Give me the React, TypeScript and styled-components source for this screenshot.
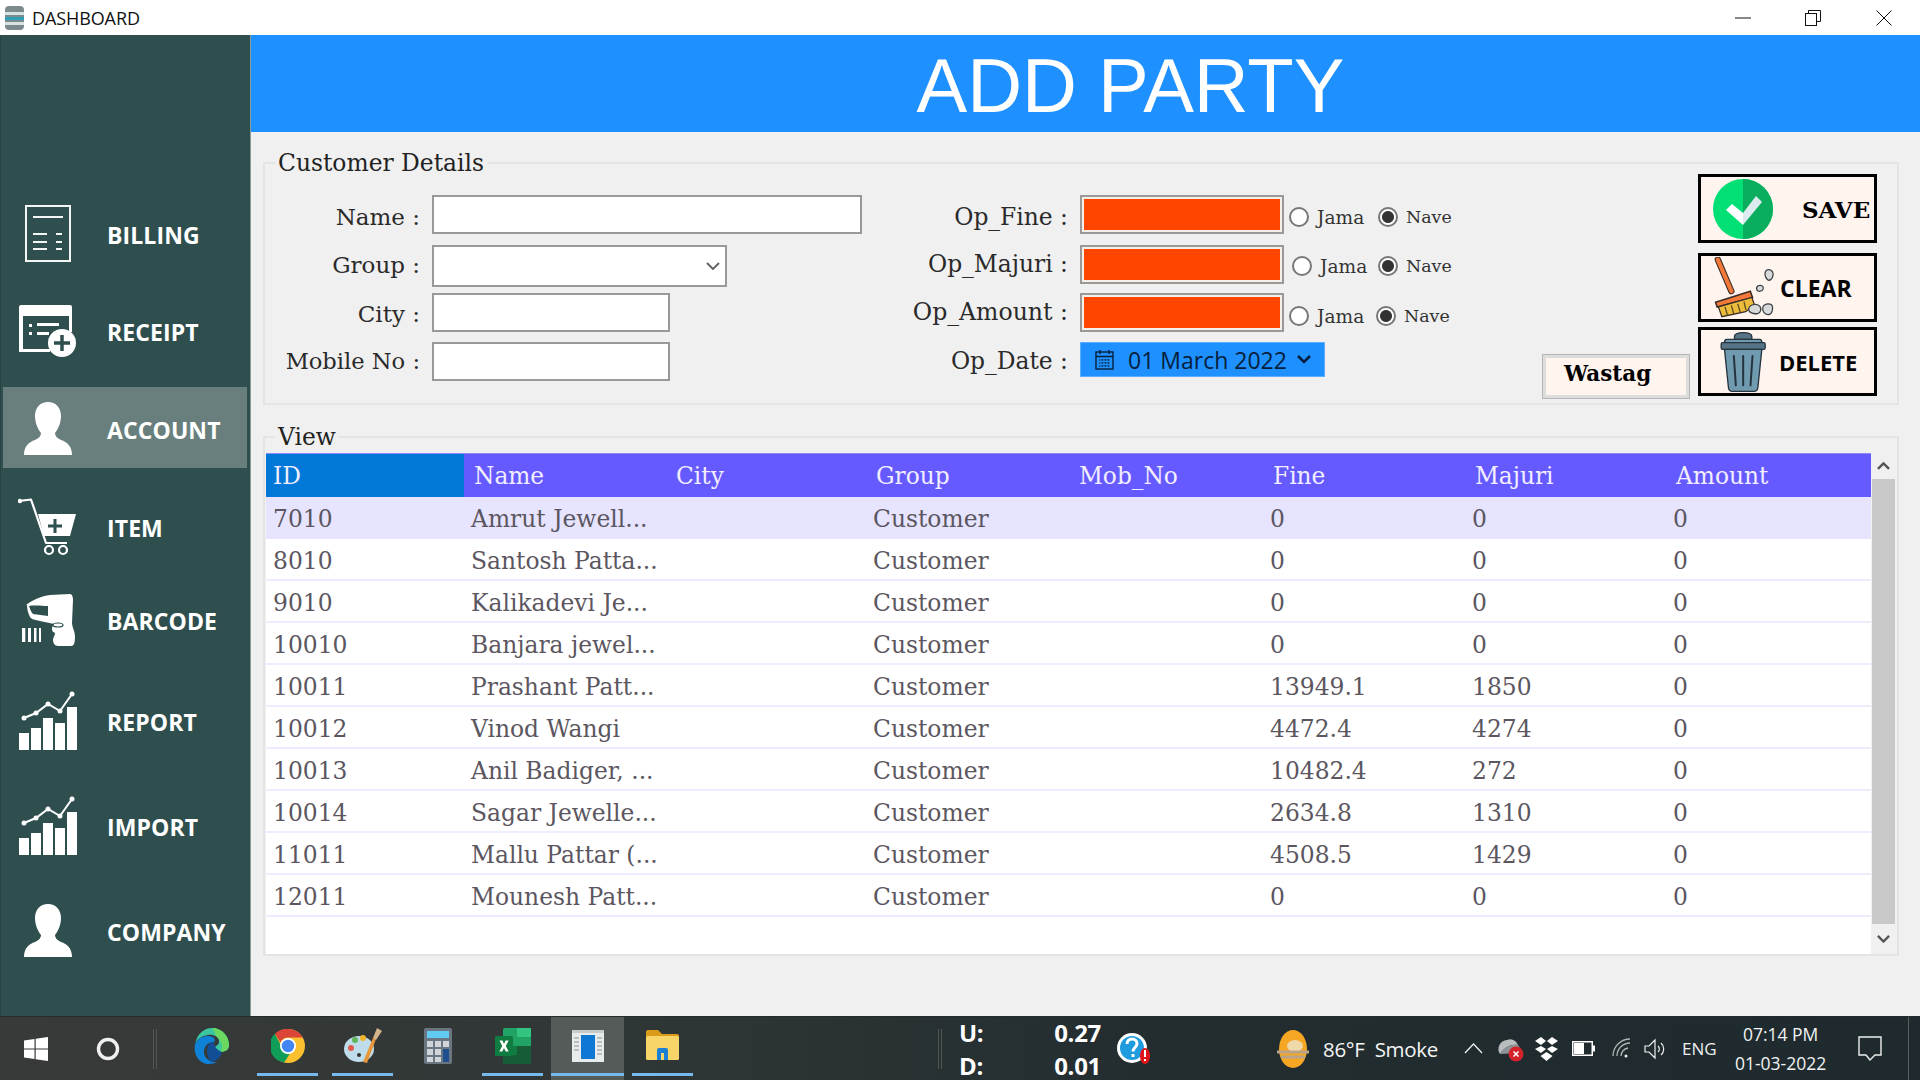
import React from "react";
import styled, { createGlobalStyle } from "styled-components";

const Global = createGlobalStyle`
  html, body { margin: 0; padding: 0; width: 1920px; height: 1080px; overflow: hidden; background: #f0f0f0; }
  * { box-sizing: border-box; }
`;

const SERIF = `"DejaVu Serif", "Liberation Serif", serif`;
const SANS = `"Open Sans", "Noto Sans", sans-serif`;

const Screen = styled.div`display: flex; flex-direction: column; width: 1920px; height: 1080px;`;

/* Title bar */
const TitleBar = styled.header`
  display: flex; align-items: center; height: 35px; background: #fff; flex: none;
  padding: 0 1px 0 5px; font: 400 18px ${SANS}; color: #111;
`;
const TitleText = styled.span`margin-left: 8px; flex: 1; letter-spacing: -0.1px;`;
const WinButton = styled.span<{ $w: number }>`display: flex; justify-content: center; align-items: center; width: ${p => p.$w}px; height: 35px;`;

/* Body */
const Body = styled.div`display: flex; flex: 1; min-height: 0;`;
const Sidebar = styled.nav`
  width: 251px; flex: none; background: #2f4f4f; padding-top: 151px;
  border-left: 1px solid #284343; border-right: 1px solid #8c9a9a;
`;
const NavItem = styled.div<{ $h: number; $mt?: number; $pt?: number; $active?: boolean }>`
  display: flex; align-items: center; height: ${p => p.$h}px; margin: ${p => p.$mt ?? 0}px 0 0 2px; width: 244px;
  padding-top: ${p => p.$pt ?? 0}px;
  background: ${p => (p.$active ? "#697f7e" : "transparent")};
`;
const NavIcon = styled.span`display: flex; justify-content: center; width: 90px; flex: none; margin-top: -3px;`;
const NavLabel = styled.span`margin-left: 14px; font: 700 23px ${SANS}; color: #fff; letter-spacing: 0.1px;`;

const Main = styled.main`flex: 1; display: flex; flex-direction: column; min-width: 0; background: #f0f0f0;`;
const Banner = styled.div`
  height: 97px; flex: none; background: #1e90ff; color: #fff; display: flex; align-items: center; justify-content: center;
  padding: 3px 0 0 90px; font: 400 76px "Liberation Sans", Arial, sans-serif;
`;
const Content = styled.div`padding: 30px 21px 0 12px; display: flex; flex-direction: column; gap: 31px;`;
const Panel = styled.section<{ $h: number }>`
  position: relative; height: ${p => p.$h}px; border: 2px solid #e4e4e4;
`;
const Legend = styled.span<{ $x: number }>`
  position: absolute; left: ${p => p.$x}px; top: -16px; padding: 0 3px; background: #f0f0f0;
  font: 400 23.4px/30px ${SERIF}; color: #222;
`;

/* Customer form */
const DetailsRow = styled.div`display: flex; height: 100%; padding: 31px 20px 0 0;`;
const FormGrid = styled.div<{ $label: number; $ml: number }>`
  display: grid; grid-template-columns: ${p => p.$label}px auto; column-gap: 12px;
  grid-template-rows: 50px 48px 49px auto; align-content: start; margin-left: ${p => p.$ml}px;
`;
const Label = styled.label<{ $y?: number; $size?: number }>`
  font: 400 ${p => p.$size ?? 23}px/38px ${SERIF}; color: #2a2a2a; text-align: right; white-space: nowrap;
  padding-top: ${p => p.$y ?? 0}px;
`;
const TextField = styled.input<{ $w: number }>`
  display: block; width: ${p => p.$w}px; height: 39px; background: #fff; border: 2px solid #999; outline: 0; padding: 0;
`;
const SelectBox = styled.div`
  display: flex; align-items: center; justify-content: flex-end; width: 295px; height: 42px;
  background: #fff; border: 2px solid #999; padding-right: 5px;
`;
const FineRow = styled.div`display: flex; align-items: flex-start;`;
const FineBox = styled.input`
  display: block; width: 204px; height: 39px; background: #ff4500; border: 2px solid #999;
  box-shadow: inset 0 0 0 2px #f4efe9; outline: 0; padding: 0;
`;
const RadioPair = styled.span<{ $ml: number; $y: number }>`
  display: flex; align-items: center; margin-left: ${p => p.$ml}px; margin-top: ${p => p.$y}px; height: 24px;
  font: 400 18.600px ${SERIF}; color: #333;
`;
const RadioDot = styled.span<{ $on?: boolean; $ml?: number }>`
  width: 20px; height: 20px; border-radius: 50%; border: 2px solid #777; margin: 0 8px 0 ${p => p.$ml ?? 0}px; flex: none;
  background: ${p => (p.$on ? "radial-gradient(circle, #333 0 5.5px, #fff 6.5px)" : "#fff")};
`;
const RadioText = styled.span`display: inline-block; width: 50px; margin-right: 10px;`;
const RadioNave = styled.span`font-size: 17.400px;`;
const DateBox = styled.div`
  display: flex; align-items: center; width: 245px; height: 35px; background: #1e90ff; border: 1px solid #5aaeff;
  padding-left: 14px; font: 400 23px ${SANS}; color: #06203c;
`;
const DateText = styled.span`margin: 0 10px 0 14px; letter-spacing: 0;`;

const Actions = styled.div`display: flex; align-items: flex-end; margin: -21px 0 0 auto; height: 222px; gap: 8px;`;
const ActionStack = styled.div`display: flex; flex-direction: column; width: 179px;`;
const ActionBtn = styled.button<{ $mt: number; $pl: number }>`
  display: flex; align-items: center; width: 179px; height: 69px; flex: none; margin-top: ${p => p.$mt}px;
  background: #fff4ee; border: 3px solid #000; padding: 0 0 0 ${p => p.$pl}px; cursor: default;
`;
const BtnSerif = styled.span`margin-left: 29px; padding-top: 2px; font: 700 23px ${SERIF}; color: #000;`;
const BtnSans = styled.span<{ $ml: number; $size: number }>`margin-left: ${p => p.$ml}px; font: 700 ${p => p.$size}px ${SANS}; color: #050505;`;
const WastagBtn = styled.button`
  width: 148px; height: 45px; margin-bottom: -3px; background: #fff4ee; border: 1px solid #b5b5b5;
  box-shadow: inset 0 0 0 3px #ddd; padding: 0 0 6px 21px; text-align: left; font: 700 21.500px ${SERIF}; color: #000; cursor: default;
`;

/* Table */
const ViewRow = styled.div`display: flex; height: 100%; padding: 15px 3px 0 1px;`;
const TableWrap = styled.div`width: 1605px; background: #fff;`;
const COLS = "198px 202px 200px 203px 194px 202px 201px 205px";
const HeadRow = styled.div`display: grid; grid-template-columns: ${COLS}; height: 44px; background: #655aff; border-top: 1px solid #8f88ff;`;
const HeadCell = styled.div<{ $sel?: boolean }>`
  padding-left: ${p => (p.$sel ? 7 : 10)}px; font: 400 23.300px/43px ${SERIF}; color: #f2eeff; background: ${p => (p.$sel ? "#0078d7" : "transparent")};
`;
const DataRow = styled.div<{ $sel?: boolean }>`
  display: grid; grid-template-columns: ${COLS}; height: 42px;
  background: ${p => (p.$sel ? "#e6e4ff" : "#fff")};
  border-bottom: 2px solid ${p => (p.$sel ? "#e6e4ff" : "#eeecff")};
`;
const Cell = styled.div`padding-left: 7px; font: 400 23.400px/44px ${SERIF}; color: #5b5660; white-space: nowrap;`;
const ScrollBar = styled.div`display: flex; flex-direction: column; align-items: center; width: 24px; margin-left: 1px;`;
const ScrollBtn = styled.div<{ $h: number }>`display: flex; align-items: center; justify-content: center; height: ${p => p.$h}px; flex: none;`;
const ScrollThumb = styled.div`flex: 1; width: 23px; background: #c9c9c9;`;

/* Taskbar */
const Taskbar = styled.footer`
  position: relative; display: flex; align-items: center; height: 64px; flex: none; color: #fff;
  background: linear-gradient(90deg, #383a39 0%, #303736 30%, #232d30 60%, #1e2a2e 100%);
  border-top: 1px solid #242c2c;
`;
const Slot = styled.div<{ $w: number; $ml?: number }>`
  display: flex; align-items: center; justify-content: center; flex: none; height: 100%;
  width: ${p => p.$w}px; margin-left: ${p => p.$ml ?? 0}px;
`;
const AppSlot = styled(Slot)<{ $open?: boolean; $active?: boolean }>`
  position: relative; padding-bottom: 6px;
  background: ${p => (p.$active ? "#555b59" : "transparent")};
  &::after {
    content: ""; position: absolute; left: 0; right: 0; bottom: 4px; height: 3px;
    background: ${p => (p.$open ? "#76b9ed" : "transparent")};
  }
`;
const Divider = styled.span`width: 4px; height: 40px; border-left: 1px solid #555; border-right: 1px solid #555;`;
const NetGrid = styled.div`
  display: grid; grid-template-columns: 92px 50px; grid-auto-rows: 33px; margin-left: 17px;
  font: 700 24px/33px ${SANS}; color: #fff; letter-spacing: -0.3px;
`;
const NetValue = styled.span`text-align: right;`;
const WeatherText = styled.span`margin-left: 14px; font: 400 20.500px ${SANS}; white-space: pre; letter-spacing: -0.3px; color: #f4f4f4;`;
const LangText = styled.span`font: 400 17px ${SANS}; color: #eee;`;
const Clock = styled.div`
  display: flex; flex-direction: column; align-items: center; width: 110px; margin-left: 9px;
  font: 400 17.500px/29px ${SANS}; color: #f2f2f2;
`;
const TrayGlyph = styled.span<{ $ml: number }>`display: flex; margin-left: ${p => p.$ml}px;`;
const DesktopEdge = styled.span`width: 1px; height: 100%; margin-left: 26px; background: #59605f;`;

/* Drawings */
const Person = () => (
  <svg width="48" height="53" viewBox="0 0 48 53">
    <path fill="#fff" d="M24 0c8 0 13 6 13 14 0 7-3 13-6 17 0 3 2 5 6 7 6 2 11 6 11 15H0c0-9 5-13 11-15 4-2 6-4 6-7-3-4-6-10-6-17C11 6 16 0 24 0z" />
  </svg>
);
const ChartIcon = () => (
  <svg width="58" height="59" viewBox="0 0 58 59">
    <g fill="#fff">
      <rect x="0" y="42" width="10" height="17" /><rect x="12" y="37" width="10" height="22" />
      <rect x="24" y="27" width="10" height="32" /><rect x="36" y="32" width="10" height="27" />
      <rect x="48" y="16" width="10" height="43" />
      <path d="M5 27 L17 22 L29 13 L41 20 L53 3" fill="none" stroke="#fff" strokeWidth="2" />
      <circle cx="5" cy="27" r="2.5" /><circle cx="17" cy="22" r="2.5" /><circle cx="29" cy="13" r="2.5" />
      <circle cx="41" cy="20" r="2.5" /><circle cx="53" cy="3" r="2.5" />
    </g>
  </svg>
);
const BillingIcon = () => (
  <svg width="46" height="57" viewBox="0 0 46 57" fill="none" stroke="#f4f6f6" strokeWidth="2">
    <rect x="1" y="1" width="44" height="55" />
    <path d="M8 12h30M8 29h14M31 29h6M8 37h14M31 37h6M8 44h14M31 44h6" />
  </svg>
);
const ReceiptIcon = () => (
  <svg width="58" height="52" viewBox="0 0 58 52">
    <path fill="#fff" d="M2 0h49a2 2 0 0 1 2 2v25h-3V11H4v33h27v3H0V2a2 2 0 0 1 2-2z" />
    <g fill="#fff"><rect x="10" y="19" width="3" height="3" /><rect x="10" y="27" width="3" height="3" /><rect x="18" y="18" width="22" height="3" /><rect x="18" y="27" width="12" height="3" /></g>
    <circle cx="43" cy="38" r="14" fill="#fff" />
    <path d="M43 30v16M35 38h16" stroke="#2f4f4f" strokeWidth="3.5" />
  </svg>
);
const CartIcon = () => (
  <svg width="60" height="58" viewBox="0 0 60 58">
    <path d="M1 3 L13 1.500 L28 45 H49" fill="none" stroke="#fff" strokeWidth="2.2" strokeLinejoin="round" />
    <circle cx="2" cy="3" r="2.200" fill="#fff" />
    <path fill="#fff" d="M20 16h38l-6 22H26z" />
    <path d="M37 21v14M30 28h14" stroke="#2f4f4f" strokeWidth="3" />
    <circle cx="31" cy="52" r="4" fill="none" stroke="#fff" strokeWidth="2.200" />
    <circle cx="45" cy="52" r="4" fill="none" stroke="#fff" strokeWidth="2.200" />
  </svg>
);
const BarcodeIcon = () => (
  <svg width="56" height="54" viewBox="0 0 56 54">
    <path fill="#fff" d="M6 12C12 7 22 3 30 2L50 1c2 0 3 3 3 6l-1 23c0 4 3 9 3 13 0 7-1 10-4 10H38c-3 0-5-3-5-6 0-3 2-4 2-7-2-1-3-2-3-4 0-2 1-4 2-5-4-1-10-2-14-3-5-1-9-2-10-4-2-4-3-8-3-12z" />
    <path fill="#2f4f4f" d="M9 13c6-1 14 0 19 0v10L13 21c-2-2-3-5-4-8z" />
    <ellipse cx="38" cy="32" rx="5" ry="2" fill="none" stroke="#2f4f4f" strokeWidth="1.200" />
    <g fill="#fff"><rect x="2" y="35" width="3.300" height="14" /><rect x="8" y="35" width="3" height="14" /><rect x="14" y="35" width="2.500" height="14" /><rect x="19" y="35" width="2" height="14" /></g>
  </svg>
);
const BroomIcon = () => (
  <svg width="60" height="62" viewBox="0 0 190 190">
    <path d="M12 5 L55 105" stroke="#3a2c24" strokeWidth="20" strokeLinecap="round" />
    <path d="M12 5 L55 105" stroke="#f2793a" strokeWidth="13" strokeLinecap="round" />
    <path d="M5 140 L115 105 L122 125 L10 155 z" fill="#f2793a" stroke="#3a2c24" strokeWidth="5" />
    <path d="M14 155 L120 125 L128 148 L100 170 L25 186 z" fill="#eebc3c" stroke="#3a2c24" strokeWidth="4" />
    <path d="M35 155l8 28M55 150l8 28M75 145l8 26M95 138l6 26" stroke="#5c4a1e" strokeWidth="4" />
    <g fill="#d7dadb" stroke="#3d4143" strokeWidth="4">
      <path d="M110 160c4-14 28-18 36-6 4 8 2 20-8 22-12 2-30-2-28-16z" />
      <path d="M155 155c6-14 28-12 30-2 2 12-2 26-12 26-12 2-22-12-18-24z" />
      <path d="M140 88c8-4 18 0 16 10-2 8-16 10-20 4-2-6 0-12 4-14z" />
      <path d="M165 40c10-8 24 0 22 14-2 14-12 20-18 14-8-8-10-20-4-28z" />
    </g>
  </svg>
);
const TrashIcon = () => (
  <svg width="46" height="60" viewBox="0 0 135 180">
    <path d="M42 14c0-8 8-12 26-12s26 4 26 12v8H42z" fill="#567485" stroke="#26343f" strokeWidth="4" />
    <path d="M18 22h100c4 0 6 4 6 10H12c0-6 2-10 6-10z" fill="#6f9aaf" stroke="#26343f" strokeWidth="4" />
    <rect x="2" y="32" width="132" height="20" rx="4" fill="#567485" stroke="#26343f" strokeWidth="4" />
    <path d="M12 52h112l-12 116c-1 7-5 10-12 10H36c-7 0-11-3-12-10z" fill="#6f9aaf" stroke="#26343f" strokeWidth="4" />
    <path d="M40 72l6 88M68 72v88M96 72l-6 88" stroke="#26343f" strokeWidth="6" strokeLinecap="round" />
  </svg>
);
const SaveIcon = () => (
  <svg width="60" height="60" viewBox="0 0 60 60">
    <circle cx="30" cy="30" r="30" fill="#02df75" />
    <path d="M30 0a30 30 0 0 1 0 60z" fill="#0aad5e" />
    <path d="M13 31l6-6 11 9V46z" fill="#fff" />
    <path d="M30 34 L43 17l6 6-19 23z" fill="#dcecee" />
  </svg>
);
const ChevronDown = ({ c = "#666", w = 14, s = 2 }: { c?: string; w?: number; s?: number }) => (
  <svg width={w} height={w * 0.6} viewBox="0 0 14 8.4" fill="none" stroke={c} strokeWidth={s}><path d="M1 1l6 6 6-6" /></svg>
);
const ChevronUp = () => (
  <svg width="13" height="8" viewBox="0 0 14 8.4" fill="none" stroke="#555" strokeWidth="2.6"><path d="M1 7.4l6-6 6 6" /></svg>
);
const CalendarIcon = () => (
  <svg width="19" height="21" viewBox="0 0 19 21" fill="none" stroke="#06203c" strokeWidth="1.4">
    <rect x="1" y="3" width="17" height="17" /><path d="M1 7.5h17M5 1v4M14 1v4" />
    <path d="M4 11h11M4 14h11M4 17h11M7 10v8M10 10v8M13 10v8" strokeDasharray="1.5 1.5" strokeWidth="1" />
  </svg>
);
const DbIcon = () => (
  <svg width="19" height="24" viewBox="0 0 19 24">
    <rect x="0" y="0" width="19" height="24" rx="4" fill="#7c8a8d" />
    <rect x="0" y="6" width="19" height="3" fill="#d9e2e3" />
    <rect x="0" y="11" width="19" height="3" fill="#2f9fb5" />
    <rect x="0" y="16" width="19" height="3" fill="#d9e2e3" />
  </svg>
);
const WinsLogo = () => (
  <svg width="24" height="24" viewBox="0 0 24 24" fill="#fff">
    <path d="M0 3.5l10.5-1.5v9.4H0zM11.7 1.8L24 0v11.4H11.7zM0 12.6h10.5V22L0 20.5zM11.7 12.6H24V24l-12.3-1.8z" />
  </svg>
);
const CortanaRing = () => <svg width="24" height="24" viewBox="0 0 24 24"><circle cx="12" cy="12" r="9.5" fill="none" stroke="#f0f0f0" strokeWidth="3.4" /></svg>;
const EdgeLogo = () => (
  <svg width="36" height="36" viewBox="0 0 36 36">
    <path d="M2 16C4 6 11 0 19 0c10 0 17 8 17 17 0 5-4 7-9 7-4 0-6-1-6-3 0-4 5-2 5-8C26 9 20 6 15 7 8 8 3 12 2 16z" fill="#3bc6a0" />
    <path d="M19 0c10 0 17 8 17 17 0 5-4 7-9 7 3-3 3-9-2-14-3-3-4-9-6-10z" fill="#6bd85f" />
    <path d="M2 16c3-6 8-8 13-8 6 0 8 4 6 6-6 0-10 4-10 10 0 6 6 11 13 10-2 1-5 2-8 2C7 36 0 28 2 16z" fill="#0f82d8" />
    <path d="M14 22c0-5 3-8 7-8 0 3 2 8 8 10-1 5-5 9-10 10-3-1-5-7-5-12z" fill="#124e95" />
  </svg>
);
const ChromeLogo = () => (
  <svg width="34" height="36" viewBox="0 0 36 36">
    <circle cx="18" cy="18" r="18" fill="#fbc02d" />
    <path d="M18 0a18 18 0 0 1 15.6 9H18a9 9 0 0 0-8 5L4 5A18 18 0 0 1 18 0z" fill="#db4437" />
    <path d="M4 5l7 13a8 8 0 0 0 9 8l-6 9.5A18 18 0 0 1 4 5z" fill="#0f9d58" />
    <circle cx="18" cy="18" r="8.5" fill="#fff" /><circle cx="18" cy="18" r="6.6" fill="#4285f4" />
  </svg>
);
const PaintLogo = () => (
  <svg width="38" height="36" viewBox="0 0 38 36">
    <ellipse cx="15" cy="21" rx="15" ry="13" fill="#bfdcea" />
    <circle cx="7" cy="20" r="3" fill="#e25a4e" /><circle cx="11" cy="12" r="3" fill="#5fb65a" />
    <circle cx="19" cy="10" r="3" fill="#f1b52c" /><circle cx="15" cy="27" r="2" fill="#333" />
    <path d="M19 34l10-24 3 1-9 24z" fill="#e8963a" /><path d="M29 10l4-10 5 3-6 9z" fill="#d6b48a" />
  </svg>
);
const CalcLogo = () => (
  <svg width="28" height="36" viewBox="0 0 28 36">
    <rect width="28" height="36" rx="2" fill="#6a7682" /><rect x="3" y="3" width="22" height="7" fill="#5fcbf1" />
    <g fill="#cfd5da">
      <rect x="3" y="13" width="6" height="6" /><rect x="11" y="13" width="6" height="6" /><rect x="19" y="13" width="6" height="6" />
      <rect x="3" y="21" width="6" height="6" /><rect x="11" y="21" width="6" height="6" />
      <rect x="3" y="29" width="6" height="5" /><rect x="11" y="29" width="6" height="5" />
    </g>
    <rect x="19" y="21" width="6" height="13" fill="#1f4f8f" />
  </svg>
);
const ExcelLogo = () => (
  <svg width="36" height="36" viewBox="0 0 36 36">
    <rect x="8" y="0" width="28" height="36" rx="2" fill="#21a366" />
    <rect x="22" y="0" width="14" height="9" fill="#33c481" /><rect x="8" y="18" width="14" height="9" fill="#107c41" />
    <rect x="22" y="18" width="14" height="9" fill="#185c37" /><rect x="8" y="27" width="28" height="9" fill="#185c37" />
    <rect x="0" y="8" width="18" height="20" rx="1.5" fill="#107c41" />
    <path d="M4.5 12.5h3L9 16l1.6-3.5h3L10.8 18l2.9 5.5h-3L9 20l-1.7 3.5h-3L7.200 18z" fill="#fff" />
  </svg>
);
const WindowLogo = () => (
  <svg width="32" height="32" viewBox="0 0 32 32">
    <rect width="32" height="32" fill="#e9ecec" /><rect width="32" height="3" fill="#c6cbcb" />
    <rect x="9" y="5" width="14" height="24" fill="#0f78d4" />
    <path d="M2 8h5M2 12h5M2 16h5M2 20h5M25 8h5M25 12h5M25 16h5M25 20h5M25 24h5" stroke="#8a8f8f" strokeWidth="1.2" />
  </svg>
);
const FolderLogo = () => (
  <svg width="33" height="34" viewBox="0 0 33 34">
    <path d="M0 3a2 2 0 0 1 2-2h10l4 4h15a2 2 0 0 1 2 2v3H0z" fill="#d99b18" />
    <rect y="7" width="33" height="24" rx="1.5" fill="#f8d568" />
    <path d="M11 31V21a2 2 0 0 1 2-2h7a2 2 0 0 1 2 2v10h-4v-7h-3v7z" fill="#1b7fd4" />
  </svg>
);
const HelpIcon = () => (
  <svg width="34" height="34" viewBox="0 0 34 34">
    <circle cx="15" cy="16" r="15" fill="#fff" /><circle cx="15" cy="16" r="12" fill="#1f9be0" />
    <path d="M10 12c0-3 2-5 5-5s5 2 5 4.500c0 4-4 4-4 8M16 22v3" fill="none" stroke="#fff" strokeWidth="3" />
    <ellipse cx="28" cy="24" rx="5" ry="8" fill="#e1141c" /><path d="M28 18v7M28 27v2" stroke="#fff" strokeWidth="2" />
  </svg>
);
const WeatherIcon = () => (
  <svg width="32" height="38" viewBox="0 0 32 38">
    <ellipse cx="16" cy="19" rx="14" ry="19" fill="#f5a623" />
    <ellipse cx="18" cy="16" rx="8" ry="6" fill="#f0d9a8" />
    <path d="M0 22h32M4 27h24" stroke="#b9a48a" strokeWidth="3" />
  </svg>
);
const TrayCloud = () => (
  <svg width="27" height="26" viewBox="0 0 27 26">
    <path d="M3 18a9 9 0 0 1 7-14c4-2 9 0 11 5-8-1-14 3-18 9z" fill="#b9bdbe" />
    <path d="M3 18c4-6 10-10 18-9 2 2 3 5 2 8z" fill="#8f9496" />
    <circle cx="19" cy="18" r="7.500" fill="#d3222a" />
    <path d="M16.500 15.500l5 5M21.500 15.500l-5 5" stroke="#fff" strokeWidth="1.500" />
  </svg>
);
const DropboxIcon = () => (
  <svg width="23" height="24" viewBox="0 0 23 24" fill="#fff">
    <path d="M6 0l5 4-5 4-6-4zM17 0l6 4-6 4-5-4zM6 9l5 3-5 4-6-4zM17 9l6 3-6 4-5-4zM11.500 15l6 4-6 5-6-5z" />
  </svg>
);
const BatteryIcon = () => (
  <svg width="23" height="15" viewBox="0 0 23 15">
    <rect x=".75" y=".75" width="19.500" height="13.500" fill="none" stroke="#fff" strokeWidth="1.500" />
    <rect x="2" y="2" width="10" height="11" fill="#fff" /><rect x="21" y="4.500" width="2" height="6" fill="#fff" />
  </svg>
);
const WifiIcon = () => (
  <svg width="21" height="21" viewBox="0 0 21 21" fill="none" stroke="#aeb4b4" strokeWidth="1.300">
    <path d="M1 18A17 17 0 0 1 18 1M5 18A13 13 0 0 1 18 5M9 18a9 9 0 0 1 7-8" /><circle cx="14" cy="18" r="1.500" fill="#eee" stroke="none" />
  </svg>
);
const VolumeIcon = () => (
  <svg width="22" height="22" viewBox="0 0 22 22" fill="none" stroke="#eee" strokeWidth="1.200">
    <path d="M1 8h4l6-6v18l-6-6H1zM14 8a4 4 0 0 1 0 6M17 5a8 8 0 0 1 0 12" />
  </svg>
);
const TrayUp = () => <svg width="19" height="11" viewBox="0 0 19 11" fill="none" stroke="#eee" strokeWidth="1.300"><path d="M1 10l8.500-9 8.500 9" /></svg>;
const NoticeIcon = () => (
  <svg width="24" height="25" viewBox="0 0 24 25" fill="none" stroke="#eee" strokeWidth="1.400"><path d="M1 1h22v18h-6l-5 5-4-5H1z" /></svg>
);

const NAV: { h: number; mt?: number; pt?: number; label: string; icon: React.ReactNode; active?: boolean }[] = [
  { h: 97.5, label: "BILLING", icon: <BillingIcon /> },
  { h: 97.5, label: "RECEIPT", icon: <ReceiptIcon /> },
  { h: 81, mt: 6, pt: 5, label: "ACCOUNT", icon: <Person />, active: true },
  { h: 98, mt: 11, label: "ITEM", icon: <CartIcon /> },
  { h: 88, label: "BARCODE", icon: <BarcodeIcon /> },
  { h: 114, label: "REPORT", icon: <ChartIcon /> },
  { h: 96, label: "IMPORT", icon: <ChartIcon /> },
  { h: 114, label: "COMPANY", icon: <Person /> },
];

const ROWS = [
  ["7010", "Amrut Jewell...", "", "Customer", "", "0", "0", "0"],
  ["8010", "Santosh Patta...", "", "Customer", "", "0", "0", "0"],
  ["9010", "Kalikadevi Je...", "", "Customer", "", "0", "0", "0"],
  ["10010", "Banjara jewel...", "", "Customer", "", "0", "0", "0"],
  ["10011", "Prashant Patt...", "", "Customer", "", "13949.1", "1850", "0"],
  ["10012", "Vinod Wangi", "", "Customer", "", "4472.4", "4274", "0"],
  ["10013", "Anil Badiger, ...", "", "Customer", "", "10482.4", "272", "0"],
  ["10014", "Sagar Jewelle...", "", "Customer", "", "2634.8", "1310", "0"],
  ["11011", "Mallu Pattar (...", "", "Customer", "", "4508.5", "1429", "0"],
  ["12011", "Mounesh Patt...", "", "Customer", "", "0", "0", "0"],
];
const HEAD = ["ID", "Name", "City", "Group", "Mob_No", "Fine", "Majuri", "Amount"];

const Radios = ({ a, b, y }: { a: number; b: number; y: number }) => (
  <RadioPair $ml={a} $y={y}>
    <RadioDot /><RadioText>Jama</RadioText>
    <RadioDot $on $ml={b} /><RadioNave>Nave</RadioNave>
  </RadioPair>
);

export default function App() {
  return (
    <Screen>
      <Global />
      <TitleBar>
        <DbIcon />
        <TitleText>DASHBOARD</TitleText>
        <WinButton $w={70}><svg width="16" height="16" viewBox="0 0 16 16"><path d="M0 8h16" stroke="#111" /></svg></WinButton>
        <WinButton $w={70}><svg width="16" height="16" viewBox="0 0 16 16" fill="none" stroke="#111"><rect x=".5" y="3.500" width="11" height="12" /><path d="M3.500 3V.5h12v11H12" /></svg></WinButton>
        <WinButton $w={71}><svg width="16" height="16" viewBox="0 0 16 16" stroke="#111"><path d="M.5.5l15 15M15.500.5l-15 15" /></svg></WinButton>
      </TitleBar>
      <Body>
        <Sidebar>
          {NAV.map(n => (
            <NavItem key={n.label} $h={n.h} $mt={n.mt} $pt={n.pt} $active={n.active}>
              <NavIcon>{n.icon}</NavIcon>
              <NavLabel>{n.label}</NavLabel>
            </NavItem>
          ))}
        </Sidebar>
        <Main>
          <Banner>ADD PARTY</Banner>
          <Content>
            <Panel $h={243}>
              <Legend $x={10}>Customer Details</Legend>
              <DetailsRow>
                <FormGrid $label={155} $ml={0}>
                  <Label $y={3}>Name :</Label><TextField $w={430} />
                  <Label $y={1}>Group :</Label><SelectBox><ChevronDown /></SelectBox>
                  <Label $y={2}>City :</Label><TextField $w={238} />
                  <Label $size={22.6}>Mobile No :</Label><TextField $w={238} />
                </FormGrid>
                <FormGrid $label={181} $ml={25}>
                  <Label $y={3} $size={23.4}>Op_Fine :</Label>
                  <FineRow><FineBox /><Radios a={5} b={1} y={10} /></FineRow>
                  <Label $size={23.4}>Op_Majuri :</Label>
                  <FineRow><FineBox /><Radios a={8} b={-2} y={9} /></FineRow>
                  <Label $size={23.6}>Op_Amount :</Label>
                  <FineRow><FineBox /><Radios a={5} b={-1} y={11} /></FineRow>
                  <Label $size={23.4}>Op_Date :</Label>
                  <DateBox><CalendarIcon /><DateText>01 March 2022</DateText><ChevronDown c="#06203c" w={14} s={2.6} /></DateBox>
                </FormGrid>
                <Actions>
                  <WastagBtn>Wastag</WastagBtn>
                  <ActionStack>
                    <ActionBtn $mt={0} $pl={12}><SaveIcon /><BtnSerif>SAVE</BtnSerif></ActionBtn>
                    <ActionBtn $mt={10} $pl={13}><BroomIcon /><BtnSans $ml={6} $size={23}>CLEAR</BtnSans></ActionBtn>
                    <ActionBtn $mt={5} $pl={19}><TrashIcon /><BtnSans $ml={13} $size={22}>DELETE</BtnSans></ActionBtn>
                  </ActionStack>
                </Actions>
              </DetailsRow>
            </Panel>
            <Panel $h={520}>
              <Legend $x={10}>View</Legend>
              <ViewRow>
                <TableWrap>
                  <HeadRow>{HEAD.map((h, i) => <HeadCell key={h} $sel={i === 0}>{h}</HeadCell>)}</HeadRow>
                  {ROWS.map((r, i) => (
                    <DataRow key={r[0]} $sel={i === 0}>
                      {r.map((c, j) => <Cell key={j}>{c}</Cell>)}
                    </DataRow>
                  ))}
                </TableWrap>
                <ScrollBar>
                  <ScrollBtn $h={26}><ChevronUp /></ScrollBtn>
                  <ScrollThumb />
                  <ScrollBtn $h={30}><ChevronDown c="#555" w={13} s={2.6} /></ScrollBtn>
                </ScrollBar>
              </ViewRow>
            </Panel>
          </Content>
        </Main>
      </Body>
      <Taskbar>
        <Slot $w={72}><WinsLogo /></Slot>
        <Slot $w={72}><CortanaRing /></Slot>
        <Slot $w={22}><Divider /></Slot>
        <AppSlot $w={61} $ml={14}><EdgeLogo /></AppSlot>
        <AppSlot $w={61} $ml={16} $open><ChromeLogo /></AppSlot>
        <AppSlot $w={61} $ml={14} $open><PaintLogo /></AppSlot>
        <AppSlot $w={61} $ml={14}><CalcLogo /></AppSlot>
        <AppSlot $w={61} $ml={14} $open><ExcelLogo /></AppSlot>
        <AppSlot $w={73} $ml={8} $open $active><WindowLogo /></AppSlot>
        <AppSlot $w={61} $ml={8} $open><FolderLogo /></AppSlot>
        <Slot $w={4} $ml={245}><Divider /></Slot>
        <NetGrid>
          <span>U:</span><NetValue>0.27</NetValue>
          <span>D:</span><NetValue>0.01</NetValue>
        </NetGrid>
        <TrayGlyph $ml={16}><HelpIcon /></TrayGlyph>
        <TrayGlyph $ml={126}><WeatherIcon /></TrayGlyph>
        <WeatherText>86°F  Smoke</WeatherText>
        <TrayGlyph $ml={26}><TrayUp /></TrayGlyph>
        <TrayGlyph $ml={14}><TrayCloud /></TrayGlyph>
        <TrayGlyph $ml={11}><DropboxIcon /></TrayGlyph>
        <TrayGlyph $ml={14}><BatteryIcon /></TrayGlyph>
        <TrayGlyph $ml={17}><WifiIcon /></TrayGlyph>
        <TrayGlyph $ml={11}><VolumeIcon /></TrayGlyph>
        <TrayGlyph $ml={16}><LangText>ENG</LangText></TrayGlyph>
        <Clock><span>07:14 PM</span><span>01-03-2022</span></Clock>
        <TrayGlyph $ml={22}><NoticeIcon /></TrayGlyph>
        <DesktopEdge />
      </Taskbar>
    </Screen>
  );
}
